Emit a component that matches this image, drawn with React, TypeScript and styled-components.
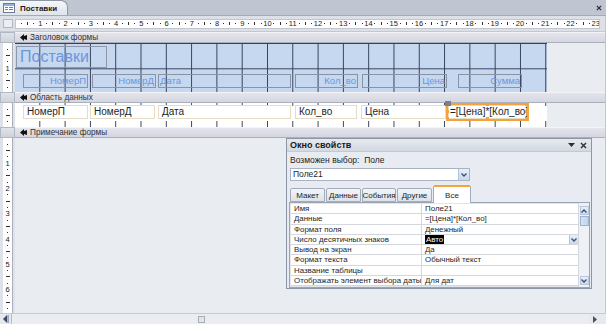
import styled, { createGlobalStyle } from 'styled-components';

const UNIT = 25.3;
const Q = UNIT / 4;

const GlobalStyle = createGlobalStyle`
  html, body { margin: 0; padding: 0; }
  body { font-family: 'Liberation Sans', Arial, sans-serif; color: #1e1e1e; }
  * { box-sizing: border-box; }
`;

const Window = styled.div`
  width: 606px;
  height: 324px;
  display: flex;
  flex-direction: column;
  overflow: hidden;
  background: #e9ecf1;
`;

/* ---------- document tab strip ---------- */

const TabStrip = styled.div`
  height: 16px;
  flex: none;
  display: flex;
  align-items: flex-end;
  background: #bfc6d2;
  border-bottom: 1px solid #a3abb9;
`;

const DocTab = styled.div`
  height: 15px;
  display: flex;
  align-items: center;
  gap: 5px;
  padding: 0 10px 0 3px;
  background: linear-gradient(#f5f7fa, #dfe4eb);
  border: 1px solid #8e97a6;
  border-left: none;
  border-bottom: none;
  border-top-right-radius: 7px;
  font-size: 8px;
  font-weight: bold;
  color: #1b1b1b;
`;

const CloseDoc = styled.div`
  margin-left: auto;
  width: 14px;
  height: 15px;
  display: flex;
  align-items: center;
  justify-content: center;
`;

/* ---------- workspace ---------- */

const Workspace = styled.div`
  flex: 1;
  min-height: 0;
  display: flex;
`;

const Designer = styled.div`
  flex: 1;
  position: relative;
  display: flex;
  flex-direction: column;
  background: #e9ecf1;
`;

const RulerRow = styled.div`
  height: 16px;
  flex: none;
  display: flex;
  align-items: center;
  background: #dde1e7;
  border-bottom: 1px solid #c3c8d1;
`;

const Corner = styled.div`
  width: 10px;
  height: 9px;
  margin: 0 2px 0 3px;
  background: #eceef2;
  border: 1px solid #b0b7c2;
`;

const HRuler = styled.div`
  flex: 1;
  height: 10px;
  margin-right: 5px;
  display: flex;
  align-items: center;
  overflow: hidden;
  background: #fff;
  border: 1px solid #c0c6cf;
  padding-left: ${Q / 2 - 1}px;
`;

const RulerCell = styled.div<{ $vertical?: boolean }>`
  flex: none;
  width: ${(p) => (p.$vertical ? 'auto' : `${Q}px`)};
  height: ${(p) => (p.$vertical ? `${Q}px` : 'auto')};
  display: flex;
  align-items: center;
  justify-content: center;
  font-size: 7.5px;
  line-height: 7px;
  color: #222;
`;

const Mark = styled.div<{ $w: number; $h: number }>`
  width: ${(p) => p.$w}px;
  height: ${(p) => p.$h}px;
  background: #333;
`;

function rulerMarks(cells: number, vertical: boolean) {
  const out = [];
  for (let i = 1; i <= cells; i++) {
    let content;
    if (i % 4 === 0) content = i / 4;
    else if (i % 2 === 0) content = vertical ? <Mark $w={4} $h={1} /> : <Mark $w={1} $h={3} />;
    else content = <Mark $w={1} $h={1} />;
    out.push(
      <RulerCell key={i} $vertical={vertical}>
        {content}
      </RulerCell>
    );
  }
  return out;
}

/* ---------- sections ---------- */

const SectionRow = styled.div<{ $h?: number }>`
  display: flex;
  flex: ${(p) => (p.$h ? 'none' : '1')};
  height: ${(p) => (p.$h ? `${p.$h}px` : 'auto')};
  min-height: 0;
`;

const Gutter = styled.div`
  width: 15px;
  flex: none;
  display: flex;
  padding: 0 2px 0 3px;
  background: #dfe2e8;
`;

const VRuler = styled.div`
  flex: 1;
  display: flex;
  flex-direction: column;
  align-items: center;
  overflow: hidden;
  background: #fff;
  border-right: 1px solid #a9b0bb;
  padding-top: ${Q / 2}px;
`;

const Selector = styled.div`
  width: 15px;
  flex: none;
  background: linear-gradient(#e1e3ea, #cfd2db);
  border: 1px solid #b2b8c3;
`;

const BarBody = styled.div`
  flex: 1;
  display: flex;
  align-items: center;
  gap: 3px;
  padding-left: 5px;
  background: linear-gradient(#e4e4ec, #d5d6e0);
  border-top: 1px solid #f4f4f8;
  border-bottom: 1px solid #a9afbb;
  font-size: 8.2px;
  color: #333;
`;

const Surface = styled.div<{ $kind: 'header' | 'detail' }>`
  width: 532px;
  flex: none;
  display: flex;
  flex-direction: column;
  background-color: ${(p) => (p.$kind === 'header' ? '#c6d8f0' : '#fff')};
  background-image: ${(p) =>
    p.$kind === 'header'
      ? `linear-gradient(to right, transparent calc(100% - 1px), #34415a calc(100% - 1px)),
         linear-gradient(to bottom, transparent calc(100% - 1px), #34415a calc(100% - 1px))`
      : `linear-gradient(to right, transparent calc(100% - 1px), #3a4355 calc(100% - 1px)),
         linear-gradient(to right, transparent calc(100% - 1px), #3a4355 calc(100% - 1px))`};
  background-size: ${(p) =>
    p.$kind === 'header' ? `${UNIT}px ${UNIT}px` : `${UNIT}px 3px, ${UNIT}px 6px`};
  background-position: ${(p) => (p.$kind === 'header' ? '0 0' : 'left top, left bottom')};
  background-repeat: ${(p) => (p.$kind === 'header' ? 'repeat' : 'repeat-x')};
  border-top: ${(p) => (p.$kind === 'header' ? '1px solid #34415a' : 'none')};
`;

const Beyond = styled.div`
  flex: 1;
  background: #e9ecf0;
`;

const EmptyArea = styled.div`
  flex: 1;
  background: #e9ecf1;
`;

const TitleBox = styled.div`
  margin: 2px 0 0 1px;
  width: 91px;
  height: 22px;
  padding-left: 3px;
  border: 1px solid #8f98a8;
  font-size: 16px;
  line-height: 20px;
  color: #6c96da;
`;

const ControlRow = styled.div<{ $top: number }>`
  display: flex;
  height: 14px;
  margin-top: ${(p) => p.$top}px;
`;

const LabelBox = styled.div<{ $w: number; $ml: number; $left?: boolean }>`
  flex: none;
  width: ${(p) => p.$w}px;
  margin-left: ${(p) => p.$ml}px;
  padding: 0 1px;
  border: 1px solid #8a93a3;
  font-size: 9.5px;
  line-height: 12px;
  color: #6c96da;
  text-align: ${(p) => (p.$left ? 'left' : 'right')};
  white-space: nowrap;
`;

const FieldBox = styled.div<{ $w: number; $ml: number; $selected?: boolean }>`
  flex: none;
  position: relative;
  width: ${(p) => p.$w}px;
  margin-left: ${(p) => p.$ml}px;
  padding-left: ${(p) => (p.$selected ? 1 : 3)}px;
  background: #fff;
  border: 1px solid #e4dcc4;
  outline: ${(p) => (p.$selected ? '2px solid #f5a13c' : 'none')};
  font-size: 10px;
  line-height: 12px;
  color: #1e1e1e;
  white-space: nowrap;
`;

const Handle = styled.div<{ $x: string; $y: string; $move?: boolean }>`
  position: absolute;
  left: ${(p) => p.$x};
  top: ${(p) => p.$y};
  width: ${(p) => (p.$move ? 6 : 3)}px;
  height: ${(p) => (p.$move ? 5 : 3)}px;
  margin: ${(p) => (p.$move ? '-4px 0 0 -3px' : '-2px 0 0 -2px')};
  background: ${(p) => (p.$move ? '#7b7f86' : '#f5a13c')};
`;

/* ---------- scroll bars ---------- */

const VScroll = styled.div`
  width: 11px;
  flex: none;
  display: flex;
  flex-direction: column;
  align-items: center;
  background: #f1f2f5;
  border-left: 1px solid #c0c6cf;
  padding: 4px 0 7px;
`;

const Thumb = styled.div<{ $mt?: number; $ml?: number }>`
  width: 7px;
  height: 7px;
  margin-top: ${(p) => p.$mt ?? 0}px;
  margin-left: ${(p) => p.$ml ?? 0}px;
  background: #e1e4e9;
  border: 1px solid #a8aeb8;
`;

const Spacer = styled.div`
  flex: 1;
`;

const HScroll = styled.div`
  height: 11px;
  flex: none;
  display: flex;
  align-items: center;
  background: #e6e9ee;
  border-top: 1px solid #c5cad3;
`;

const NavCell = styled.div`
  width: 12px;
  height: 100%;
  display: flex;
  align-items: center;
  justify-content: center;
  border-right: 1px solid #b5bcc7;
`;

const HTrack = styled.div`
  flex: 1;
  display: flex;
  align-items: center;
  height: 100%;
  background: #ebedf1;
`;

const EndCell = styled.div`
  width: 17px;
  height: 100%;
  display: flex;
  align-items: center;
  justify-content: flex-start;
  padding-left: 3px;
`;

/* ---------- property sheet ---------- */

const PropSheet = styled.div`
  position: absolute;
  left: 286px;
  top: 122px;
  width: 306px;
  height: 151px;
  display: flex;
  flex-direction: column;
  background: #e8ecf2;
  border: 1px solid #8c96a6;
`;

const SheetTitle = styled.div`
  height: 13px;
  flex: none;
  display: flex;
  align-items: center;
  padding: 0 4px 0 3px;
  background: linear-gradient(#e6e9ef, #d3d9e2);
  border-bottom: 1px solid #c3c9d3;
  font-size: 9px;
  font-weight: bold;
  color: #1a1a1a;
`;

const TitleTools = styled.div`
  margin-left: auto;
  display: flex;
  align-items: center;
  gap: 5px;
`;

const SheetBody = styled.div`
  flex: 1;
  display: flex;
  flex-direction: column;
  padding: 3px 1px 0 3px;
`;

const Hint = styled.div`
  height: 10px;
  font-size: 8.5px;
  line-height: 10px;
  white-space: pre;
  color: #222;
`;

const Combo = styled.div`
  margin-top: 3px;
  width: 180px;
  height: 13px;
  display: flex;
  background: #fff;
  border: 1px solid #a9b3c2;
  font-size: 8.5px;
  line-height: 11px;
`;

const ComboText = styled.div`
  flex: 1;
  padding-left: 2px;
`;

const DropButton = styled.div<{ $w?: number }>`
  width: ${(p) => p.$w ?? 11}px;
  display: flex;
  align-items: center;
  justify-content: center;
  background: linear-gradient(#e8eff9, #c9d8ee);
  border-left: 1px solid #b5c3d8;
`;

const TabsRow = styled.div`
  margin-top: 4px;
  height: 17px;
  display: flex;
  align-items: flex-end;
  position: relative;
  z-index: 1;
`;

const SheetTab = styled.div<{ $w: number; $active?: boolean }>`
  width: ${(p) => p.$w}px;
  height: ${(p) => (p.$active ? 18 : 14)}px;
  margin-right: 1px;
  margin-bottom: ${(p) => (p.$active ? -1 : 0)}px;
  display: flex;
  align-items: center;
  justify-content: center;
  background: ${(p) => (p.$active ? '#fff' : 'linear-gradient(#f3f5f8, #dde2e9)')};
  border: 1px solid #a3acba;
  border-top: ${(p) => (p.$active ? '2px solid #f5a33a' : '1px solid #a3acba')};
  border-bottom: ${(p) => (p.$active ? 'none' : '1px solid #a3acba')};
  border-radius: 2px 2px 0 0;
  font-size: 8px;
  color: #1e1e1e;
  white-space: nowrap;
`;

const PropGrid = styled.div`
  margin-left: -1px;
  width: 301px;
  height: 86px;
  display: flex;
  background: #fff;
  border: 1px solid #9aa4b3;
  box-shadow: inset 0 0 0 1px #e2e6ec;
`;

const Rows = styled.div`
  flex: 1;
  padding: 1px 0 0 1px;
`;

const PropRow = styled.div`
  display: grid;
  grid-template-columns: 131px 1fr;
  height: 10.3px;
  border-bottom: 1px solid #d4d8de;
  font-size: 7.9px;
  line-height: 9px;
`;

const PropLabel = styled.div`
  padding-left: 3px;
  border-right: 1px solid #d4d8de;
  white-space: nowrap;
  overflow: hidden;
`;

const PropValue = styled.div`
  display: flex;
  padding-left: 3px;
  white-space: nowrap;
`;

const Highlight = styled.span`
  background: #000;
  color: #fff;
  padding: 0 1px;
`;

const GridScroll = styled.div`
  width: 11px;
  display: flex;
  flex-direction: column;
  align-items: center;
  padding: 3px 0 2px;
  background: #eef1f5;
  border-left: 1px solid #d4d8de;
`;

const ScrollBtn = styled.div`
  width: 9px;
  height: 9px;
  display: flex;
  align-items: center;
  justify-content: center;
  background: linear-gradient(#e8eff9, #c9d8ee);
  border: 1px solid #b9c7dc;
`;

const GridThumb = styled.div`
  width: 9px;
  height: 10px;
  margin-top: 1px;
  background: linear-gradient(to right, #d8e3f3, #c2d3ec);
  border: 1px solid #9db2d2;
`;

/* ---------- icons ---------- */

const Chevron = ({ up, color = '#3c4d6e' }: { up?: boolean; color?: string }) => (
  <svg width="6" height="4" viewBox="0 0 6 4">
    <path d={up ? 'M0.5 3.5 L3 1 L5.5 3.5' : 'M0.5 0.5 L3 3 L5.5 0.5'} fill="none" stroke={color} strokeWidth="1.3" />
  </svg>
);

const Triangle = ({ dir, color = '#27344f' }: { dir: 'up' | 'down' | 'left' | 'right'; color?: string }) => {
  const d = {
    up: 'M0 5 L3.5 1 L7 5 Z',
    down: 'M0 1 L7 1 L3.5 5 Z',
    left: 'M5 0 L5 7 L1 3.5 Z',
    right: 'M1 0 L1 7 L5 3.5 Z',
  }[dir];
  return (
    <svg width="7" height="7" viewBox="0 0 7 7">
      <path d={d} fill={color} />
    </svg>
  );
};

const CrossIcon = ({ size = 7 }: { size?: number }) => (
  <svg width={size} height={size} viewBox="0 0 7 7">
    <path d="M1 1 L6 6 M6 1 L1 6" stroke="#2d2d2d" strokeWidth="1.4" />
  </svg>
);

const FormIcon = () => (
  <svg width="12" height="10" viewBox="0 0 12 10">
    <rect x="0.5" y="0.5" width="11" height="9" fill="#fff" stroke="#6b7a96" />
    <rect x="1" y="1" width="10" height="2" fill="#8fb0e0" />
    <rect x="2" y="4" width="3" height="1" fill="#d05a6a" />
    <rect x="2" y="6" width="3" height="1" fill="#d05a6a" />
    <rect x="6" y="4" width="4" height="1" fill="#5b7fc0" />
    <rect x="6" y="6" width="4" height="1" fill="#5b7fc0" />
  </svg>
);

const SectionMarker = () => (
  <svg width="7" height="7" viewBox="0 0 7 7">
    <path d="M0 3.5 L4 0 L4 2 L7 1 L7 6 L4 5 L4 7 Z" fill="#111" />
  </svg>
);

const RecordNav = () => (
  <svg width="7" height="8" viewBox="0 0 7 8">
    <path d="M5 0 L5 8 L1 4 Z" fill="#3a4a6a" />
    <rect x="5.5" y="0" width="1.2" height="8" fill="#7d8aa3" />
  </svg>
);

/* ---------- data ---------- */

const headerLabels = [
  { text: 'НомерП', w: 65, ml: 8 },
  { text: 'НомерД', w: 64, ml: 4 },
  { text: 'Дата', w: 133, ml: 2, left: true },
  { text: 'Кол_во', w: 63, ml: 4 },
  { text: 'Цена', w: 85, ml: 4 },
  { text: 'Сумма', w: 64, ml: 11 },
];

const detailFields = [
  { text: 'НомерП', w: 65, ml: 8 },
  { text: 'НомерД', w: 65, ml: 2 },
  { text: 'Дата', w: 133, ml: 3 },
  { text: 'Кол_во', w: 62, ml: 4 },
  { text: 'Цена', w: 85, ml: 4 },
];

const tabs = [
  { text: 'Макет', w: 35 },
  { text: 'Данные', w: 35 },
  { text: 'События', w: 34 },
  { text: 'Другие', w: 35 },
  { text: 'Все', w: 38, active: true },
];

const props = [
  ['Имя', 'Поле21'],
  ['Данные', '=[Цена]*[Кол_во]'],
  ['Формат поля', 'Денежный'],
  ['Число десятичных знаков', 'Авто'],
  ['Вывод на экран', 'Да'],
  ['Формат текста', 'Обычный текст'],
  ['Название таблицы', ''],
  ['Отображать элемент выбора даты', 'Для дат'],
];

function SectionBar({ title }: { title: string }) {
  return (
    <SectionRow $h={11}>
      <Selector />
      <BarBody>
        <SectionMarker />
        {title}
      </BarBody>
    </SectionRow>
  );
}

function PropertySheet() {
  return (
    <PropSheet>
      <SheetTitle>
        Окно свойств
        <TitleTools>
          <Triangle dir="down" color="#2d2d2d" />
          <CrossIcon />
        </TitleTools>
      </SheetTitle>
      <SheetBody>
        <Hint>{'Возможен выбор:  Поле'}</Hint>
        <Combo>
          <ComboText>Поле21</ComboText>
          <DropButton>
            <Chevron />
          </DropButton>
        </Combo>
        <TabsRow>
          {tabs.map((t) => (
            <SheetTab key={t.text} $w={t.w} $active={t.active}>
              {t.text}
            </SheetTab>
          ))}
        </TabsRow>
        <PropGrid>
          <Rows>
            {props.map(([label, value]) => (
              <PropRow key={label}>
                <PropLabel>{label}</PropLabel>
                <PropValue>
                  {value === 'Авто' ? <Highlight>{value}</Highlight> : value}
                  {value === 'Авто' && (
                    <>
                      <Spacer />
                      <DropButton $w={9}>
                        <Chevron />
                      </DropButton>
                    </>
                  )}
                </PropValue>
              </PropRow>
            ))}
          </Rows>
          <GridScroll>
            <ScrollBtn>
              <Chevron up />
            </ScrollBtn>
            <GridThumb />
            <Spacer />
            <ScrollBtn>
              <Chevron />
            </ScrollBtn>
          </GridScroll>
        </PropGrid>
      </SheetBody>
    </PropSheet>
  );
}

export default function App() {
  return (
    <>
      <GlobalStyle />
      <Window>
        <TabStrip>
          <DocTab>
            <FormIcon />
            Поставки
          </DocTab>
          <CloseDoc>
            <CrossIcon size={6} />
          </CloseDoc>
        </TabStrip>

        <Workspace>
          <Designer>
            <RulerRow>
              <Corner />
              <HRuler>{rulerMarks(92, false)}</HRuler>
            </RulerRow>

            <SectionBar title="Заголовок формы" />
            <SectionRow $h={49}>
              <Gutter>
                <VRuler>{rulerMarks(7, true)}</VRuler>
              </Gutter>
              <Surface $kind="header">
                <TitleBox>Поставки</TitleBox>
                <ControlRow $top={6}>
                  {headerLabels.map((l) => (
                    <LabelBox key={l.text} $w={l.w} $ml={l.ml} $left={l.left}>
                      {l.text}
                    </LabelBox>
                  ))}
                </ControlRow>
              </Surface>
              <Beyond />
            </SectionRow>

            <SectionBar title="Область данных" />
            <SectionRow $h={24}>
              <Gutter>
                <VRuler>{rulerMarks(3, true)}</VRuler>
              </Gutter>
              <Surface $kind="detail">
                <ControlRow $top={2}>
                  {detailFields.map((f) => (
                    <FieldBox key={f.text} $w={f.w} $ml={f.ml}>
                      {f.text}
                    </FieldBox>
                  ))}
                  <FieldBox $w={79} $ml={2} $selected>
                    =[Цена]*[Кол_во]
                    <Handle $x="-1px" $y="-1px" $move />
                    <Handle $x="50%" $y="-1px" />
                    <Handle $x="calc(100% + 1px)" $y="-1px" />
                    <Handle $x="calc(100% + 1px)" $y="50%" />
                    <Handle $x="calc(100% + 1px)" $y="calc(100% + 1px)" />
                    <Handle $x="50%" $y="calc(100% + 1px)" />
                    <Handle $x="-1px" $y="calc(100% + 1px)" />
                    <Handle $x="-1px" $y="50%" />
                  </FieldBox>
                </ControlRow>
              </Surface>
              <Beyond />
            </SectionRow>

            <SectionBar title="Примечание формы" />
            <SectionRow>
              <Gutter>
                <VRuler>{rulerMarks(27, true)}</VRuler>
              </Gutter>
              <EmptyArea />
            </SectionRow>

            <PropertySheet />
          </Designer>

          <VScroll>
            <Triangle dir="up" />
            <Thumb $mt={88} />
            <Spacer />
            <Triangle dir="down" color="#4a4f58" />
          </VScroll>
        </Workspace>

        <HScroll>
          <NavCell>
            <RecordNav />
          </NavCell>
          <HTrack>
            <Thumb $ml={186} />
          </HTrack>
          <EndCell>
            <Triangle dir="right" color="#4a4f58" />
          </EndCell>
        </HScroll>
      </Window>
    </>
  );
}
